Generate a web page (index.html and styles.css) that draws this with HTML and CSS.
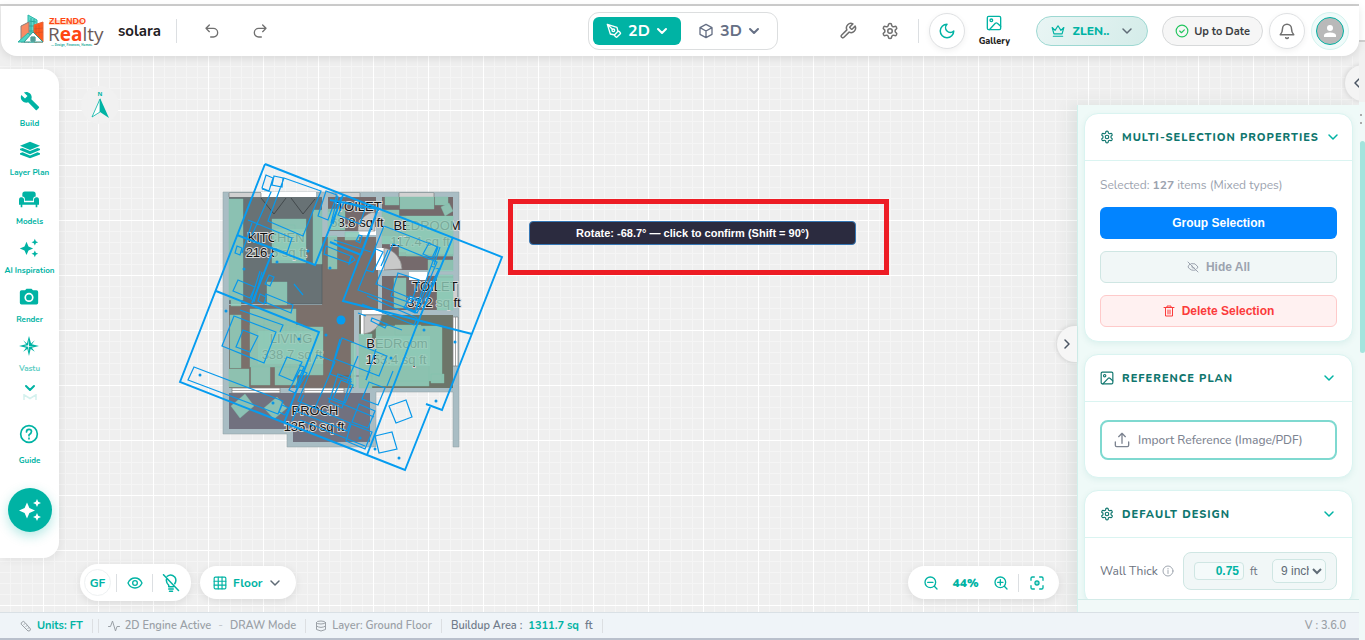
FILE: index.html
```html
<!DOCTYPE html>
<html lang="en">
<head>
<meta charset="utf-8">
<title>Zlendo Realty - solara</title>
<link rel="stylesheet" href="styles.css">
</head>
<body>
<svg class="defs" aria-hidden="true">
  <symbol id="i-chev" viewBox="0 0 24 24"><path d="m4 8 8 8 8-8"/></symbol>
  <symbol id="i-gear" viewBox="0 0 24 24"><path d="M12.2 2h-.4a2 2 0 0 0-2 2v.2a2 2 0 0 1-1 1.700l-.4.3a2 2 0 0 1-2 0l-.2-.1a2 2 0 0 0-2.700.7l-.2.4a2 2 0 0 0 .7 2.700l.2.1a2 2 0 0 1 1 1.700v.6a2 2 0 0 1-1 1.700l-.2.1a2 2 0 0 0-.7 2.700l.2.4a2 2 0 0 0 2.700.7l.2-.1a2 2 0 0 1 2 0l.4.3a2 2 0 0 1 1 1.700v.2a2 2 0 0 0 2 2h.4a2 2 0 0 0 2-2v-.2a2 2 0 0 1 1-1.700l.4-.3a2 2 0 0 1 2 0l.2.1a2 2 0 0 0 2.700-.7l.2-.4a2 2 0 0 0-.7-2.700l-.2-.1a2 2 0 0 1-1-1.700v-.6a2 2 0 0 1 1-1.700l.2-.1a2 2 0 0 0 .7-2.700l-.2-.4a2 2 0 0 0-2.700-.7l-.2.1a2 2 0 0 1-2 0l-.4-.3a2 2 0 0 1-1-1.700V4a2 2 0 0 0-2-2z"/><circle cx="12" cy="12" r="3"/></symbol>
  <symbol id="i-image" viewBox="0 0 24 24"><rect x="2" y="2" width="20" height="20" rx="2"/><circle cx="8" cy="8" r="2"/><path d="M5 22 14 12.500q1.500-1.500 3 0L22 17"/></symbol>
  <symbol id="i-spark" viewBox="0 0 24 24"><path d="M9 4.500 11.400 10.100 17 12.500 11.400 14.900 9 20.500 6.600 14.900 1 12.500 6.600 10.100zM19 1l1.200 2.800L23 5l-2.800 1.200L19 9l-1.200-2.800L15 5l2.800-1.200zM19 15l1.200 2.800L23 19l-2.800 1.200L19 23l-1.200-2.800L15 19l2.800-1.200z"/></symbol>
</svg>
<div class="app">
  <div class="window">
    <header class="topbar">
      <div class="top-left">
        <svg class="logo" viewBox="0 0 90 34" role="img" aria-label="Zlendo Realty">
          <path d="M11 1 20 6V28H11z" fill="#62d9cc" stroke="#2bb8aa"/>
          <path d="M12 7 19 8M12 12 19 12M12 17 19 17M14 4v22M17 5v22" stroke="#2aa89c" fill="none"/>
          <path d="M4 12 12 8V28H4z" fill="#f98a63" stroke="#8b7d7a"/>
          <path d="M17 11 26 8V28H17z" fill="#ff5a1f" stroke="#e2673c"/>
          <path d="M19 12v10M22 11v12M17 15l9-1M17 19l9-1" stroke="#c9502a" stroke-width=".6"/>
          <path d="M1 28 11 19 14 22 8 28z" fill="#4fd6c7" stroke="#2fb3a5"/>
          <path d="M7 28 16 18 26 28z" fill="#fff" stroke="#2e9c92"/>
          <path d="M14 23h4v4h-4zM16 23v4M14 25h4" fill="none" stroke="#167f76"/>
          <rect x="32" y="6" width="34" height="5" fill="#ffd9c4"/>
          <text x="32" y="10" class="logo-name">ZLENDO</text>
          <text x="31" y="27" class="logo-word">R<tspan class="logo-hot">ea</tspan>lty</text>
          <text x="34" y="32" class="logo-tag">— Design, Finances, Homes.</text>
        </svg>
        <strong class="project">solara</strong>
        <span class="rule"></span>
        <button class="plain" aria-label="Undo"><svg viewBox="0 0 24 24" class="ico s16"><path d="M8 3 3 8l5 5M3 8h11a6 6 0 0 1 0 13h-4"/></svg></button>
        <button class="plain" aria-label="Redo"><svg viewBox="0 0 24 24" class="ico s16"><path d="m16 3 5 5-5 5M21 8H10a6 6 0 0 0 0 13h4"/></svg></button>
      </div>
      <div class="modes">
        <button class="mode active"><svg viewBox="0 0 24 24" class="ico s16"><path d="m15 21-2-2a1 1 0 0 1 0-1.500l5-5a1 1 0 0 1 1.500 0l2 2a1 1 0 0 1 0 1.500l-5 5a1 1 0 0 1-1.500 0zM18 13l-1.500-6.500L2 2l4.500 14.500L13 18M2 2l7.500 7.500"/><circle cx="11" cy="11" r="2"/></svg>2D<svg class="ico s12 bold"><use href="#i-chev"/></svg></button>
        <button class="mode"><svg viewBox="0 0 24 24" class="ico s16"><path d="m12 2 9 5v10l-9 5-9-5V7zM3 7l9 5 9-5M12 12v10"/></svg>3D<svg class="ico s12 bold"><use href="#i-chev"/></svg></button>
      </div>
      <div class="top-right">
        <button class="plain" aria-label="Tools"><svg viewBox="0 0 24 24" class="ico s18"><path d="M14.700 6.300a1 1 0 0 0 0 1.400l1.600 1.600a1 1 0 0 0 1.400 0l3.800-3.800a6 6 0 0 1-8 8L6.600 20.400a2.100 2.100 0 0 1-3-3l6.900-6.900a6 6 0 0 1 8-8z"/></svg></button>
        <button class="plain" aria-label="Settings"><svg class="ico s18"><use href="#i-gear"/></svg></button>
        <span class="rule"></span>
        <button class="round teal" aria-label="Dark mode"><svg viewBox="0 0 24 24" class="ico s18"><path d="M12 3a6 6 0 0 0 9 9 9 9 0 1 1-9-9z"/></svg></button>
        <button class="gallery"><svg class="ico s16 teal"><use href="#i-image"/></svg>Gallery</button>
        <button class="pill plan-pill"><svg viewBox="0 0 24 24" class="ico s14"><path d="m2 6 5 5 5-8 5 8 5-5-3 11H5zM4 21h16"/></svg><b>ZLEN..</b><svg class="ico s12 grey"><use href="#i-chev"/></svg></button>
        <button class="pill sync-pill"><svg viewBox="0 0 24 24" class="ico s14 green"><circle cx="12" cy="12" r="10"/><path d="m8 12 3 3 5-5"/></svg>Up to Date</button>
        <button class="round bell" aria-label="Notifications"><svg viewBox="0 0 24 24" class="ico s18"><path d="M3 17c2-2 3-4 3-8a6 6 0 0 1 12 0c0 4 1 6 3 8zM10.300 21a2 2 0 0 0 3.400 0"/></svg></button>
        <button class="avatar" aria-label="Account"><svg viewBox="0 0 24 24"><circle cx="12" cy="8" r="4"/><path d="M4 20v-2c0-3 5-4 8-4s8 1 8 4v2z"/></svg></button>
      </div>
    </header>

    <main class="workspace">
      <div class="canvas">
        <svg class="compass" viewBox="0 0 38 38" role="img" aria-label="North"><circle cx="19" cy="19" r="19" fill="#f1f1f1"/><text x="19" y="10">N</text><path d="M19 13 11 31l8-5z" fill="#fff" stroke="#00b3a4" stroke-width=".8"/><path d="M19 12v14l9 6z" fill="#00b3a4"/></svg>
        <svg class="plan" viewBox="170 150 350 330" role="img" aria-label="Ground floor plan">
          <path fill="#a9bdc4" stroke="#8e9ca2" stroke-width=".5" d="M223 192H459V447H453V392H376V447H287V434H223z"/>
          <path fill="#687275" d="M229 197H322V304H229z"/>
          <path fill="#7b706b" d="M322 237H376V253L378 270V310H354V388H229V305H322z"/>
          <path fill="#71717f" d="M229 393H370V442H293V429H229z"/>
          <path fill="#756a6c" d="M328 197H376V231H328zM382 197H453V270H382zM382 276H453V310H382z"/>
          <path fill="#6d7569" d="M359 315H453V388H359z"/>
          <path fill="#fff" d="M376 248H384V270H376zM409 272h18v8h-18zM362 310h20v4h-20zM361 315h3v20h-3zM358 227h18v8h-18zM261 192h55v5h-55z"/>
          <path d="M322 253V304H270M340 376h32" fill="none" stroke="#525d63" stroke-width=".7"/>
          <g class="win"><path d="M229 193h32v4h-32zM336 193h24v4h-24zM399 193h35v4h-35zM453 283h4v17h-4zM453 317h5v49h-5zM232 388h48v5h-48zM304 388h40v5h-40z"/><path d="M229 195h32M336 195h24M399 195h35M455 283v17M455.500 317v49M232 390.500h48M304 390.500h40"/></g>
          <g class="sel">
            <path d="M229 199h14v101h-14zM272 219h34v44h-34zM278 225h17v22h-17zM313 210h9v54h-9zM267 282h20v23h-20zM231 300h10v6h-10zM328 209h17v21h-17zM328 236h9v33h-9zM345 232h14v8h-14z"/>
            <path d="M250 309h46v23h-46zM264 319h22v28h-22zM250 325h53v42h-53zM290 327h33v48h-33zM230 315h11v53h-11zM229 369h20v18h-20zM251 366h19v19h-19zM275 367h22v18h-22zM351 343h5v44h-5z"/>
            <path d="M245 394 254 406 240 418 231 406zM277 397 287 408 274 419 264 408z"/>
            <path d="M385 197h14v8h-14zM400 197h34v12h-34zM435 197h13v8h-13zM382 210h17v34h-17zM399 216h54v40h-54zM441 207l8-4 4 8-8 5zM406 237h47v19h-47zM428 260h25v11h-25zM394 278h12v30h-12zM437 275h16v35h-16z"/>
            <path d="M359 334h13v54h-13zM376 326h66v55h-66zM395 325h26v10h-26zM372 340h57v46h-57zM431 374h13v9h-13z"/>
          </g>
          <path d="M384 270V248A22 22 0 0 1 402 269zM364 334V315H382Q379 332 364 334zM358 231A18 20 0 0 1 375 212V231z" fill="#c8c9c9" stroke="#888" stroke-width=".7"/>
          <path d="M261 198 274 214 286 198M291 198 303 214 315 199" fill="none" stroke="#42494c"/>
          <g class="rooms">
            <text x="276" y="242">KITCHEN</text><text x="276" y="257">216.5 sq ft</text>
            <text x="359" y="211">TOILET</text><text x="357" y="227">68.8 sq ft</text>
            <text x="427" y="230">BEDROOM</text><text x="420" y="246">117.4 sq ft</text>
            <text x="435" y="291">TOILET</text><text x="434" y="307">33.2 sq ft</text>
            <text x="291" y="343">LIVING</text><text x="292" y="359">338.7 sq ft</text>
            <text x="397" y="348">BEDRoom</text><text x="396" y="364">153.4 sq ft</text>
            <text x="315" y="415">PROCH</text><text x="314" y="431">135.6 sq ft</text>
          </g>
          <path d="M274 229h32v31h-32zM406 216h47v38h-47zM399 237h54v15h-54zM376 336h54v30h-54zM258 331h65v33h-65zM437 278h16v32h-16zM382 236h16v8h-16zM328 212h12v18h-12z" fill="#8fcab7" opacity=".82"/>
          <g class="thick">
            <path d="M265 164 502 257 442 410 426 404M430 407 405 470 367 455 180 382 265 164"/>
            <path d="M237 235 315 265 343 195M216 291 319 332 284 423M252 303 272 253M330 242 361 255M378 209 343 301 472 334M453 237 420 317 367 455M330 200 378 209M378 209 361 255"/>
          </g>
          <g class="thin">
            <path d="M266 175 273 178 269 191 262 188zM274 176 283 178 282 187 272 185zM284 178 321 191 303 236 268 221zM262 189 271 192 252 235M248 220 292 238 287 253 248 239M252 223 242 253M237 246 242 248 240 255 235 253zM269 275 274 277 270 286 265 284zM260 271 251 300M262 272 254 302M238 280 255 287 250 298 233 291zM260 294 266 297 264 304 258 301zM266 294 293 305 291 313 265 302z"/>
            <path d="M326 191 337 195 328 220 318 216zM338 196 331 223M341 197 333 224M344 202 365 209 360 224 338 215zM334 240 371 252M326 246 351 256 349 263 324 254zM352 256 355 260 349 264zM359 235 362 236 360 243 356 241zM384 226 438 247 415 311 358 290zM393 244 437 262 420 302 376 284zM429 243 437 247 432 258 423 254zM376 249 383 252 373 272 366 270zM398 273 419 280 411 303 391 296zM431 266 439 269 417 313 408 309M367 296 417 318 414 325 362 304M410 296 420 300 415 313 404 308z"/>
            <path d="M234 316 276 332 264 363 222 346zM243 330 258 336 250 352 236 347zM287 357 302 362 293 381 279 375zM194 367 283 401 278 414 188 380zM282 405 289 408 285 415 279 412zM240 310 283 325 280 332M300 370 307 373 295 393 289 390zM299 365 304 367 295 388M317 355 335 362 315 408 298 401zM338 374 351 379 342 408 329 402zM341 380 353 385 345 403 333 398zM298 401 350 423 347 431 296 411"/>
            <path d="M342 338 387 356 379 376 335 359zM340 339 330 374 352 382M328 398 374 417M369 382 385 388 378 405 362 399zM359 404 375 411 368 428 352 422zM351 424 372 432 365 449 346 441zM389 406 406 400 412 417 396 423zM375 436 392 432 397 449 379 453zM372 318 387 324 385 328 371 321zM383 323 402 330M393 371 387 386M358 313 366 316M300 420 365 446M376 349 366 380"/>
            <path d="M440 247 434 265M366 380 370 370M304 395 292 421M388 250 381 266M294 284 303 295M358 356 347 382"/>
          </g>
          <circle cx="341" cy="320" r="4.500" fill="#059cf0"/>
          <g fill="#0a96e6"><circle cx="200" cy="375" r="1.500"/><circle cx="226" cy="311" r="1.500"/><circle cx="244" cy="269" r="1.500"/><circle cx="277" cy="262" r="1.500"/><circle cx="308" cy="251" r="1.500"/><circle cx="299" cy="339" r="1.500"/><circle cx="326" cy="335" r="1.500"/><circle cx="273" cy="403" r="1.500"/><circle cx="391" cy="358" r="1.500"/><circle cx="424" cy="330" r="1.500"/><circle cx="455" cy="342" r="1.500"/><circle cx="436" cy="401" r="1.500"/><circle cx="399" cy="458" r="1.500"/><circle cx="375" cy="449" r="1.500"/><circle cx="360" cy="438" r="1.500"/><circle cx="330" cy="268" r="1.500"/></g>
        </svg>
        <div class="callout"><div class="hint">Rotate: -68.7° — click to confirm (Shift = 90°)</div></div>
      </div>

      <nav class="sidebar" aria-label="Tools">
        <button class="tool"><svg viewBox="0 0 24 24" class="fill"><path d="m22.700 19-9.100-9.100c.9-2.300.4-5-1.500-6.900-2-2-5-2.400-7.400-1.300L9 6 6 9 1.600 4.700C.4 7.100.9 10.100 2.900 12.100c1.900 1.900 4.600 2.400 6.900 1.500l9.100 9.100c.4.4 1 .4 1.400 0l2.300-2.300c.5-.4.5-1.100.1-1.400z"/></svg>Build</button>
        <button class="tool"><svg viewBox="0 0 24 24" class="fill"><path d="M12 2 24 7 12 12 0 7zM0 10.500 3 9.500 12 13.300 21 9.500 24 10.500v1.500L12 17 0 12zM0 16 3 14.700l9 4 9-4 3 1.300v1.500L12 22 0 17.500z"/></svg>Layer Plan</button>
        <button class="tool"><svg viewBox="0 0 24 24" class="fill"><path d="M4 9V6q0-3 3-3h10q3 0 3 3v3q-3 0-3 3v2H7v-2q0-3-3-3zM2 10q3-1 4 2v4h12v-4q1-3 4-2 2 0 2 3v6h-2v3h-2v-3H4v3H2v-3H0v-6q0-3 2-3z"/></svg>Models</button>
        <button class="tool"><svg class="fill"><use href="#i-spark"/></svg>AI Inspiration</button>
        <button class="tool"><svg viewBox="0 0 24 24" class="fill"><path fill-rule="evenodd" d="M9 2 7.200 4H3q-2 0-2 2v13q0 2 2 2h18q2 0 2-2V6q0-2-2-2h-4.200L15 2zM12 7a5.500 5.500 0 1 1 0 11 5.500 5.500 0 0 1 0-11zM12 9a3.500 3.500 0 1 0 0 7 3.500 3.500 0 0 0 0-7z"/></svg>Render</button>
        <button class="tool dim"><svg viewBox="0 0 24 24" class="vastu"><path d="m12 0 2.500 9L19 5l-3.500 5L24 12l-8.500 2L19 19l-5-3.500L12 24l-2-8.500L5 19l3.500-5L0 12l8.500-2L5 5l4.500 4z"/><path d="M12 4v8l6 0-6 1-1 6v-6l-5-1 5-1z" fill="#fff"/></svg><span>Vastu</span></button>
        <div class="more"><svg class="ico s14 bold"><use href="#i-chev"/></svg><svg viewBox="0 0 18 8" class="ghost"><path d="M1 8V1l8 5 8-5v7"/></svg></div>
        <button class="tool guide"><svg viewBox="0 0 24 24" class="ico"><circle cx="12" cy="12" r="10"/><path d="M9 9.500q0-3 3-3t3 2.500q0 2-3 4v1M12 17v1"/></svg>Guide</button>
        <button class="fab" aria-label="AI assistant"><svg class="fill"><use href="#i-spark"/></svg></button>
      </nav>

      <div class="dock">
        <div class="chips">
          <div class="chip"><button class="gf">GF</button><span class="rule"></span><button class="plain teal" aria-label="Visibility"><svg viewBox="0 0 24 24" class="ico s16"><path d="M1.500 12C6 2 18 2 22.500 12 18 22 6 22 1.500 12z"/><circle cx="12" cy="12" r="3.500"/></svg></button><span class="rule"></span><button class="plain teal" aria-label="Lights off"><svg viewBox="0 0 24 24" class="ico s18"><path d="m2 1 20 21M7 3q5-4 10 1 3 4 0 9M6 7q-1 4 3 8v2h6M9 20h6M10 23h4"/></svg></button></div>
          <button class="chip floor"><svg viewBox="0 0 24 24" class="ico s14"><rect x="2" y="2" width="20" height="20" rx="2"/><path d="M9 2v20M15.500 2v20M2 9h20M2 15.500h20"/></svg>Floor<svg class="ico s12 grey"><use href="#i-chev"/></svg></button>
        </div>
        <div class="chip zoom">
          <button class="plain teal" aria-label="Zoom out"><svg viewBox="0 0 24 24" class="ico s16"><circle cx="11" cy="11" r="8"/><path d="m17 17 4 4M7 11h8"/></svg></button>
          <b>44%</b>
          <button class="plain teal" aria-label="Zoom in"><svg viewBox="0 0 24 24" class="ico s16"><circle cx="11" cy="11" r="8"/><path d="m17 17 4 4M7 11h8M11 7v8"/></svg></button>
          <span class="rule"></span>
          <button class="plain teal" aria-label="Fit"><svg viewBox="0 0 24 24" class="ico s16"><path d="M3 8V5q0-2 2-2h3M16 3h3q2 0 2 2v3M21 16v3q0 2-2 2h-3M8 21H5q-2 0-2-2v-3"/><circle cx="12" cy="12" r="3"/><path d="M12 12h.1"/></svg></button>
        </div>
      </div>

      <aside class="panel">
        <button class="handle" aria-label="Collapse panel"><svg class="ico s12 turn"><use href="#i-chev"/></svg></button>
        <div class="cards">
          <section class="card">
            <h2><svg class="ico s14"><use href="#i-gear"/></svg>MULTI-SELECTION PROPERTIES<svg class="ico s12 end"><use href="#i-chev"/></svg></h2>
            <div class="body">
              <p>Selected: <b>127</b> items (Mixed types)</p>
              <button class="act primary">Group Selection</button>
              <button class="act muted"><svg viewBox="0 0 24 24" class="ico s12"><path d="M2 2 22 22M9 5q8-2 13 7-1 2-3 4M6 6q-3 2-4 6 6 9 15 6M10 10a3 3 0 0 0 4 4"/></svg>Hide All</button>
              <button class="act danger"><svg viewBox="0 0 24 24" class="ico s12"><path d="M2 5h20M8 5V2h8v3M5 5v17h14V5M10 10v8M14 10v8"/></svg>Delete Selection</button>
            </div>
          </section>
          <section class="card">
            <h2><svg class="ico s14"><use href="#i-image"/></svg>REFERENCE PLAN<svg class="ico s12 end"><use href="#i-chev"/></svg></h2>
            <div class="body import-body"><button class="import"><svg viewBox="0 0 24 24" class="ico s16"><path d="M12 17V2M7 7l5-5 5 5M2 15v5q0 2 2 2h16q2 0 2-2v-5"/></svg>Import Reference (Image/PDF)</button></div>
          </section>
          <section class="card">
            <h2><svg class="ico s14"><use href="#i-gear"/></svg>DEFAULT DESIGN<svg class="ico s12 end"><use href="#i-chev"/></svg></h2>
            <div class="body wall">
              <label for="thick">Wall Thick</label>
              <svg viewBox="0 0 24 24" class="ico s12 info"><circle cx="12" cy="12" r="10"/><path d="M12 11v6M12 7v1"/></svg>
              <div class="measure"><input id="thick" value="0.75"><span>ft</span><select aria-label="Preset"><option>9 inch</option></select></div>
            </div>
          </section>
        </div>
        <div class="panel-foot"></div>
      </aside>
      <button class="edge-handle" aria-label="Open side panel"><svg class="ico s12 back"><use href="#i-chev"/></svg></button>
    </main>

    <footer class="status">
      <svg viewBox="0 0 24 24" class="ico s12"><path d="M3 5q4-5 7 0l11 13q0 5-5 4L3 9zM8 9l2-2M12 13l2-2M16 17l2-2"/></svg><b class="units">Units: FT</b>
      <span class="rule first"></span><span class="rule"></span>
      <svg viewBox="0 0 24 24" class="ico s12"><path d="M1 13h4L9 2l6 20 3-9h5"/></svg><span>2D Engine Active</span><span class="dash">-</span><span>DRAW Mode</span>
      <span class="rule"></span>
      <svg viewBox="0 0 24 24" class="ico s12"><ellipse cx="12" cy="5" rx="9" ry="3"/><path d="M3 5v14q9 6 18 0V5M3 12q9 6 18 0"/></svg><span>Layer: Ground Floor</span>
      <span class="rule"></span>
      <span class="area"><span>Buildup Area :</span><b>1311.7 sq</b><span>ft</span></span>
      <span class="rule"></span>
      <span class="version">V : 3.6.0</span>
    </footer>
  </div>
  <div class="scroll"><i class="dots"></i><i class="thumb"></i></div>
</div>
</body>
</html>
```
FILE: styles.css
```css
* { box-sizing: border-box; }
body {
  margin: 0;
  font-family: "Nunito", "Open Sans", sans-serif;
  font-size: 12px;
  color: #6b7280;
  background: #fff;
}
button { font: inherit; color: inherit; background: none; border: 0; padding: 0; display: inline-flex; align-items: center; justify-content: center; }
.defs { display: none; }
.app { height: 100vh; padding-top: 4px; display: flex; overflow: hidden; }
.window { flex: 1; min-width: 0; display: flex; flex-direction: column; border-top: 2px solid #cfcfcf; background: #efefef; }

.ico { fill: none; stroke: currentColor; stroke-width: 2; stroke-linecap: round; stroke-linejoin: round; flex: none; }
.fill { fill: currentColor; flex: none; }
.s12 { width: 12px; height: 12px; }
.s14 { width: 14px; height: 14px; }
.s16 { width: 16px; height: 16px; }
.s18 { width: 18px; height: 18px; }
.bold { stroke-width: 4; }
.teal { color: #00b3a4; }
.grey { color: #5f6b76; stroke-width: 3; }
.green { color: #22c55e; }
.turn { transform: rotate(-90deg); stroke-width: 3; }
.back { transform: rotate(90deg); stroke-width: 3; }
.rule { width: 1px; height: 24px; background: #dcdfe2; flex: none; }

/* top bar */
.topbar {
  position: relative;
  z-index: 2;
  display: grid;
  grid-template-columns: minmax(0, 1fr) auto minmax(0, 1fr);
  align-items: center;
  height: 50px;
  flex: none;
  margin-left: 1px;
  padding: 0 10px 0 16px;
  background: #fff;
  border-radius: 0 0 16px 16px;
  box-shadow: 0 2px 8px rgba(0, 0, 0, .1);
}
.top-left { display: flex; align-items: center; color: #707070; }
.top-left .rule { margin: 0 20px 0 15px; }
.top-left .plain { width: 30px; margin-right: 18px; }
.logo { width: 90px; height: 34px; margin-right: 11px; }
.logo-name { font: bold 9px "Liberation Sans", sans-serif; fill: #ff4612; }
.logo-word { font: 19px "Open Sans", sans-serif; fill: #6b5a58; }
.logo-hot { fill: #ff4612; font-weight: bold; }
.logo-tag { font: bold 3px "Open Sans", sans-serif; fill: #2bada0; }
.project { font-size: 15px; color: #1f2023; }
.modes { display: flex; gap: 4px; padding: 4px; border: 1px solid #dcdedf; border-radius: 11px; }
.mode { gap: 6px; width: 88px; height: 28px; border-radius: 6px; font-size: 16px; font-weight: 700; color: #667085; }
.mode.active { background: #00b3a4; color: #fff; }
.top-right { display: flex; align-items: center; justify-content: flex-end; color: #707070; }
.top-right > .plain { width: 30px; margin-right: 12px; }
.top-right > .plain + .plain { margin-right: 13px; }
.top-right > .rule { margin-right: 10px; }
.round { width: 36px; height: 36px; border: 1px solid #dfe1e3; border-radius: 50%; background: #fff; box-shadow: 0 2px 6px rgba(0, 0, 0, .06); }
.gallery { flex-direction: column; gap: 4px; margin: 0 26px 0 14px; font-size: 9px; line-height: 12px; font-weight: 800; color: #222; }
.pill { height: 30px; border-radius: 15px; border: 1px solid #d7d9da; }
.plan-pill { width: 112px; gap: 8px; margin-right: 14px; color: #00b3a4; background: linear-gradient(120deg, #e9f5f4, #d4ece9); border-color: #9dd8d2; }
.plan-pill b { font-size: 12px; font-weight: 800; }
.plan-pill .grey { margin-left: 4px; }
.sync-pill { width: 101px; gap: 5px; margin-right: 6px; background: #f6f6f6; color: #3c3f43; font-size: 11px; font-weight: 700; }
.avatar { width: 38px; height: 38px; margin-left: 6px; border-radius: 50%; border: 1px solid #d3f3ef; background: #effbfa; }
.avatar svg { width: 28px; height: 28px; padding: 4px; border-radius: 50%; background: #b9b9b9; border: 1px solid #00b3a4; fill: #fff; }

/* workspace */
.workspace {
  position: relative;
  flex: 1;
  min-height: 0;
  overflow: hidden;
  display: flex;
  align-items: flex-start;
  background-color: #efefef;
  background-image:
    linear-gradient(90deg, #fff 1px, transparent 1px),
    linear-gradient(#fff 1px, transparent 1px),
    linear-gradient(90deg, #f5f5f5 1px, transparent 1px),
    linear-gradient(#f5f5f5 1px, transparent 1px);
  background-size: 55px 55px, 55px 55px, 11px 11px, 11px 11px;
  background-position: 43px 0, 0 54px, 10px 0, 0 10px;
}
.canvas { position: absolute; inset: 0; overflow: hidden; }
.compass { position: absolute; left: 81px; top: 30px; width: 38px; height: 38px; }
.compass text { font: bold 6px "Open Sans", sans-serif; fill: #00b3a4; text-anchor: middle; }
.plan { position: absolute; left: 170px; top: 94px; width: 350px; height: 330px; }
.win { fill: #fff; stroke: #7d7d7d; stroke-width: .7; }
.sel { fill: #92d3c0; fill-opacity: .82; stroke: #7dbfac; stroke-width: .4; }
.rooms { font: 13px "Liberation Sans", sans-serif; text-anchor: middle; fill: #111; stroke: #d8d8d8; stroke-width: 2px; paint-order: stroke; }
.thick { fill: none; stroke: #059cf0; stroke-width: 1.900; }
.thin { fill: none; stroke: #0898ea; stroke-width: 1.200; }
.callout { position: absolute; left: 508px; top: 143px; padding: 17px 28px 25px 16px; border: 5px solid #ed1c24; }
.hint { width: 327px; line-height: 22px; text-align: center; font-family: "Liberation Sans", sans-serif; font-size: 11px; font-weight: 700; color: #fff; background: #2b2b3f; border: 1px solid #3577b5; border-radius: 4px; }

.sidebar { position: relative; flex: none; width: 59px; margin-top: 13px; padding: 22px 0 26px; display: flex; flex-direction: column; align-items: center; background: #fff; border-radius: 0 16px 16px 0; box-shadow: 2px 2px 8px rgba(0, 0, 0, .06); color: #00b3a4; }
.tool { flex-direction: column; justify-content: flex-start; gap: 6px; height: 49px; font-size: 8px; line-height: 14px; font-weight: 700; white-space: nowrap; }
.tool svg { width: 20px; height: 20px; }
.tool.dim { height: 46px; }
.dim span { opacity: .65; }
.vastu { fill: currentColor; }
.more { display: flex; flex-direction: column; align-items: center; height: 42px; }
.more .s14 { height: 12px; }
.ghost { width: 16px; height: 6px; fill: none; stroke: #d4f1ee; stroke-width: 2; }
.guide { gap: 10px; height: 64px; }
.fab { width: 44px; height: 44px; border-radius: 50%; background: #00b3a4; color: #fff; box-shadow: 0 4px 12px rgba(0, 179, 164, .3); }
.fab svg { width: 24px; height: 24px; }

.dock { position: relative; flex: 1; align-self: flex-end; display: flex; justify-content: space-between; align-items: center; padding: 0 18px 11px 21px; }
.chips { display: flex; align-items: center; gap: 9px; }
.chip { height: 37px; display: flex; align-items: center; border-radius: 18px; background: #fff; box-shadow: 0 2px 8px rgba(0, 0, 0, .09); color: #00b3a4; font-weight: 700; }
.chips > div { padding: 0 6px 0 4px; }
.chip .plain { width: 35px; }
.chip .rule { height: 18px; }
.chips .plain:last-child { width: 28px; margin-left: 4px; }
.gf { width: 27px; height: 27px; margin-right: 5px; border: 1px solid #eef1f2; border-radius: 50%; }
.floor { height: 33px; gap: 6px; padding: 0 15px 0 13px; }
.zoom { height: 33px; padding: 0 5px; }
.zoom b { width: 35px; text-align: center; }

/* properties panel */
.panel { position: relative; align-self: stretch; flex: none; width: 282px; margin-top: 49px; display: flex; flex-direction: column; background: #effaf8; border-left: 1px solid #d2f1ed; box-shadow: -6px 0 16px rgba(0, 60, 50, .08); }
.cards { flex: 1; min-height: 0; overflow: hidden; padding: 8px 6px 0; }
.card { margin-bottom: 12px; background: #fff; border: 1px solid #daf4f1; border-radius: 14px; box-shadow: 0 2px 6px rgba(0, 130, 115, .08); }
.card h2 { display: flex; align-items: center; gap: 8px; height: 47px; margin: 0; padding: 0 17px 0 15px; border-bottom: 1px solid #daf4f1; font-size: 11px; font-weight: 800; letter-spacing: 1px; white-space: nowrap; color: #0f766e; }
.end { margin-left: auto; color: #00b3a4; stroke-width: 3; }
.body { display: flex; flex-direction: column; gap: 12px; padding: 14px 15px 14px; }
.body p { margin: 0; line-height: 20px; color: #9ca3af; }
.act { height: 32px; gap: 7px; border-radius: 6px; font-family: "Liberation Sans", sans-serif; font-size: 12px; font-weight: 700; }
.primary { background: #0284ff; color: #fff; }
.muted { background: #f1f7f7; border: 1px solid #cfe6e3; color: #9ca3af; }
.danger { background: #fff1f1; border: 1px solid #fecaca; color: #fb3b3b; }
.import-body { padding: 18px 15px 17px; }
.import { height: 40px; justify-content: flex-start; gap: 8px; padding-left: 12px; border: 2px solid #7fd9d0; border-radius: 8px; font-weight: 500; color: #7d8491; }
.wall { flex-direction: row; align-items: center; gap: 4px; }
.measure { margin-left: auto; display: flex; align-items: center; gap: 6px; width: 154px; height: 38px; padding: 0 10px; border: 1px solid #cfe6e3; border-radius: 8px; background: #f1f7f7; font-size: 11px; }
.measure input { width: 50px; height: 18px; padding: 0 4px; text-align: right; border: 1px solid #cfe6e3; border-radius: 4px; background: #f4fafa; font: bold 12px "Liberation Sans", sans-serif; color: #00b3a4; }
.measure select { width: 54px; height: 24px; margin-left: auto; padding: 0 0 0 4px; border: 1px solid #cfe6e3; border-radius: 5px; background: #f4fafa; font: 12px "Liberation Sans", sans-serif; color: #5f6b76; }
.info { color: #a0a7b0; }
.panel-foot { height: 13px; flex: none; border-top: 1px solid #d3ebe8; background: #f1f9f8; }
.handle { position: absolute; left: -21px; top: 221px; width: 20px; height: 36px; border-radius: 18px 0 0 18px; background: #f6f6f6; box-shadow: -1px 0 4px rgba(0, 0, 0, .12); color: #4b5563; }
.edge-handle { position: absolute; right: -22px; top: 9px; width: 36px; height: 36px; justify-content: flex-start; padding-left: 6px; border-radius: 50%; background: #f4f4f4; box-shadow: -1px 0 5px rgba(0, 0, 0, .12); color: #4b5563; }

/* status bar */
.status { flex: none; height: 28px; display: flex; align-items: center; gap: 5px; padding: 0 13px 0 20px; background: #eff4f8; border-top: 1px solid #d9e0e5; border-bottom: 2px solid #b9c0cc; color: #9aa0a6; font-size: 11px; font-weight: 600; white-space: nowrap; }
.status b { font-weight: 700; color: #00b3a4; }
.status .rule { height: 14px; margin: 0 4px; }
.status .first { margin-right: -4px; }
.dash { margin: 0 2px; color: #c5c9cd; }
.area { display: flex; gap: 6px; color: #707b8a; }
.version { margin-left: auto; }

/* page scroll edge */
.scroll { width: 6px; flex: none; margin-top: 36px; padding-top: 60px; border-top: 2px solid #d0d0d0; background: linear-gradient(#f1f1f1 60px, #f0f9f8 60px); }
.dots { display: block; width: 2px; height: 10px; margin: 12px 0 17px 1px; border-top: 2px solid #aaa; border-bottom: 2px solid #aaa; }
.thumb { display: block; height: 212px; margin-left: 1px; background: #a3e4dd; border-radius: 3px; }
```
